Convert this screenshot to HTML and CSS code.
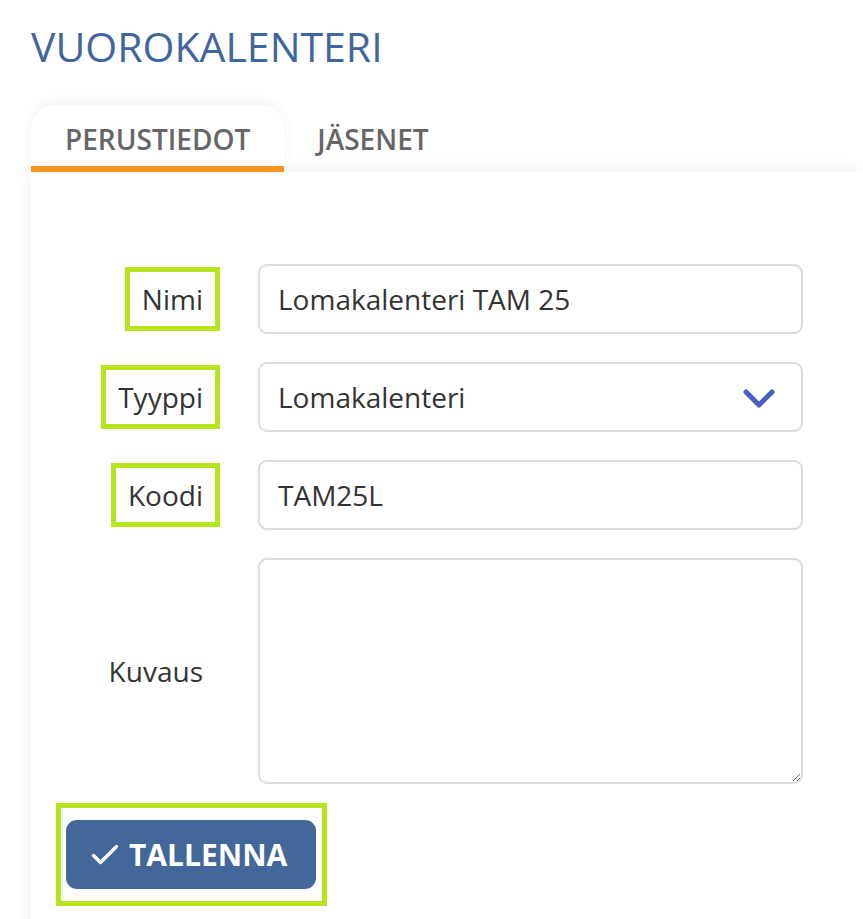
FILE: index.html
```html
<!DOCTYPE html>
<html lang="fi">
<head>
<meta charset="utf-8">
<title>Vuorokalenteri</title>
<link rel="stylesheet" href="styles.css">
</head>
<body>
<h1 class="title">VUOROKALENTERI</h1>
<div class="tabs">
  <div class="tab active">PERUSTIEDOT</div>
  <div class="tab">JÄSENET</div>
</div>
<div class="panel">
  <form class="form">
    <div class="label-cell"><label class="label hl" for="nimi">Nimi</label></div>
    <input class="field" id="nimi" type="text" value="Lomakalenteri TAM 25">

    <div class="label-cell"><label class="label hl">Tyyppi</label></div>
    <div class="field select">
      <span>Lomakalenteri</span>
      <svg class="chev" width="32" height="21" viewBox="0 0 32 21"><polyline points="3,3 16,16 29,3" fill="none" stroke="#4a5ec6" stroke-width="5" stroke-linecap="round" stroke-linejoin="round"/></svg>
    </div>

    <div class="label-cell"><label class="label hl" for="koodi">Koodi</label></div>
    <input class="field" id="koodi" type="text" value="TAM25L">

    <div class="label-cell"><label class="label" for="kuvaus">Kuvaus</label></div>
    <textarea class="field area" id="kuvaus"></textarea>
  </form>
  <div class="actions">
    <div class="btn-hl">
      <button class="btn" type="button">
        <svg width="28" height="22" viewBox="0 0 28 22"><polyline points="2.5,11.5 9.5,18.5 25.5,2.5" fill="none" stroke="#fff" stroke-width="3.4" stroke-linecap="round" stroke-linejoin="round"/></svg>
        <span>TALLENNA</span>
      </button>
    </div>
  </div>
</div>
</body>
</html>
```

FILE: styles.css
```css
html, body {
  margin: 0;
  padding: 0;
  background: #fff;
  overflow: hidden;
}
body {
  font-family: "Open Sans", "Liberation Sans", sans-serif;
  color: #333;
}
.title {
  margin: 22px 0 0 31px;
  font-size: 41px;
  line-height: 49px;
  font-weight: 400;
  color: #41669f;
}
.tabs {
  display: flex;
  margin: 34px 0 0 31px;
  position: relative;
  z-index: 1;
}
.tab {
  padding: 17px 34px 10px 34px;
  font-size: 28px;
  line-height: 34px;
  font-weight: 600;
  color: #666;
  border-bottom: 6px solid transparent;
}
.tab + .tab {
  padding-left: 33px;
}
.tab.active {
  background: #fff;
  border-radius: 24px 24px 0 0;
  border-bottom-color: #f7931e;
  box-shadow: 0 -4px 14px rgba(0, 0, 0, 0.05);
}
.panel {
  margin-left: 31px;
  background: #fff;
  box-shadow: 0 0 20px rgba(0, 0, 0, 0.07);
  min-height: 760px;
}
.form {
  display: grid;
  grid-template-columns: 189px 1fr;
  column-gap: 38px;
  row-gap: 28px;
  align-items: center;
  padding: 92px 60px 0 0;
}
.label-cell {
  display: flex;
  justify-content: flex-end;
}
.label {
  display: flex;
  align-items: center;
  height: 54px;
  padding: 0 12px;
  border: 5px solid transparent;
  font-size: 28px;
  color: #333;
}
.label.hl {
  border-color: #b5e61d;
}
.field {
  box-sizing: border-box;
  height: 70px;
  width: 100%;
  margin: 0;
  padding: 0 18px;
  border: 2px solid #dcdcdc;
  border-radius: 9px;
  background: #fff;
  font-family: "Open Sans", "Liberation Sans", sans-serif;
  font-size: 28px;
  color: #333;
  outline: none;
}
.select {
  display: flex;
  align-items: center;
  justify-content: space-between;
  padding-right: 26px;
}
.chev {
  display: block;
  margin-top: 4px;
}
.area {
  height: 226px;
  resize: both;
  padding-top: 10px;
}
.actions {
  padding: 19px 0 0 25px;
}
.btn-hl {
  display: inline-block;
  border: 5px solid #b5e61d;
  padding: 12px 6px 12px 5px;
}
.btn {
  display: flex;
  align-items: center;
  gap: 10px;
  height: 69px;
  width: 250px;
  padding: 0 0 0 25px;
  border: none;
  border-radius: 11px;
  background: #43669b;
  color: #fff;
  font-family: "Open Sans", "Liberation Sans", sans-serif;
  font-size: 30px;
  font-weight: 700;
  cursor: pointer;
}
```
